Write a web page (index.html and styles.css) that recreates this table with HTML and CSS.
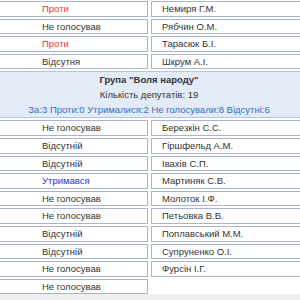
FILE: index.html
```html
<!DOCTYPE html>
<html lang="uk">
<head>
<meta charset="utf-8">
<link rel="stylesheet" href="styles.css">
</head>
<body>
<div class="votes">
  <div class="cell vote against">Проти</div><div class="cell name">Немиря Г.М.</div>
  <div class="cell vote">Не голосував</div><div class="cell name">Рябчин О.М.</div>
  <div class="cell vote against">Проти</div><div class="cell name">Тарасюк Б.І.</div>
  <div class="cell vote">Відсутня</div><div class="cell name">Шкрум А.І.</div>
  <div class="group">
    <div class="group-title">Група "Воля народу"</div>
    <div>Кількість депутатів: 19</div>
    <div class="group-sum">За:3 Проти:0 Утрималися:2 Не голосували:8 Відсутні:6</div>
  </div>
  <div class="cell vote">Не голосував</div><div class="cell name">Березкін С.С.</div>
  <div class="cell vote">Відсутній</div><div class="cell name">Гіршфельд А.М.</div>
  <div class="cell vote">Відсутній</div><div class="cell name">Іваxів С.П.</div>
  <div class="cell vote abstain">Утримався</div><div class="cell name">Мартиняк С.В.</div>
  <div class="cell vote">Не голосував</div><div class="cell name">Молоток І.Ф.</div>
  <div class="cell vote">Не голосував</div><div class="cell name">Петьовка В.В.</div>
  <div class="cell vote">Відсутній</div><div class="cell name">Поплавський М.М.</div>
  <div class="cell vote">Відсутній</div><div class="cell name">Супруненко О.І.</div>
  <div class="cell vote">Не голосував</div><div class="cell name">Фурсін І.Г.</div>
  <div class="cell vote">Не голосував</div><div class="cell empty"></div>
</div>
<div class="footer"></div>
</body>
</html>
```
FILE: styles.css
```css
html, body {
  margin: 0;
  padding: 0;
  background: #ffffff;
}
body {
  font-family: "Liberation Sans", Arial, sans-serif;
  font-size: 9.5px;
  color: #333333;
  overflow: hidden;
}
.votes {
  display: grid;
  grid-template-columns: 152px 151px;
  column-gap: 3px;
  row-gap: 2px;
  margin-left: -4px;
  padding-top: 1px;
}
.cell {
  box-sizing: border-box;
  height: 15.6px;
  line-height: 13.6px;
  border: 1px solid #a9b5cf;
  background: #ffffff;
  white-space: nowrap;
}
.vote {
  padding-left: 45px;
}
.name {
  padding-left: 10px;
}
.empty {
  border-color: transparent;
}
.against {
  color: #ff3030;
}
.abstain {
  color: #2a2af0;
}
.group {
  grid-column: 1 / span 2;
  box-sizing: border-box;
  border: 1px solid #b7c6df;
  background: #e2ebf7;
  padding: 0;
  text-align: center;
  line-height: 15px;
}
.group-title {
  font-weight: bold;
}
.group-sum {
  color: #3370c0;
}
.footer {
  height: 12px;
  background: #efefef;
}
```
